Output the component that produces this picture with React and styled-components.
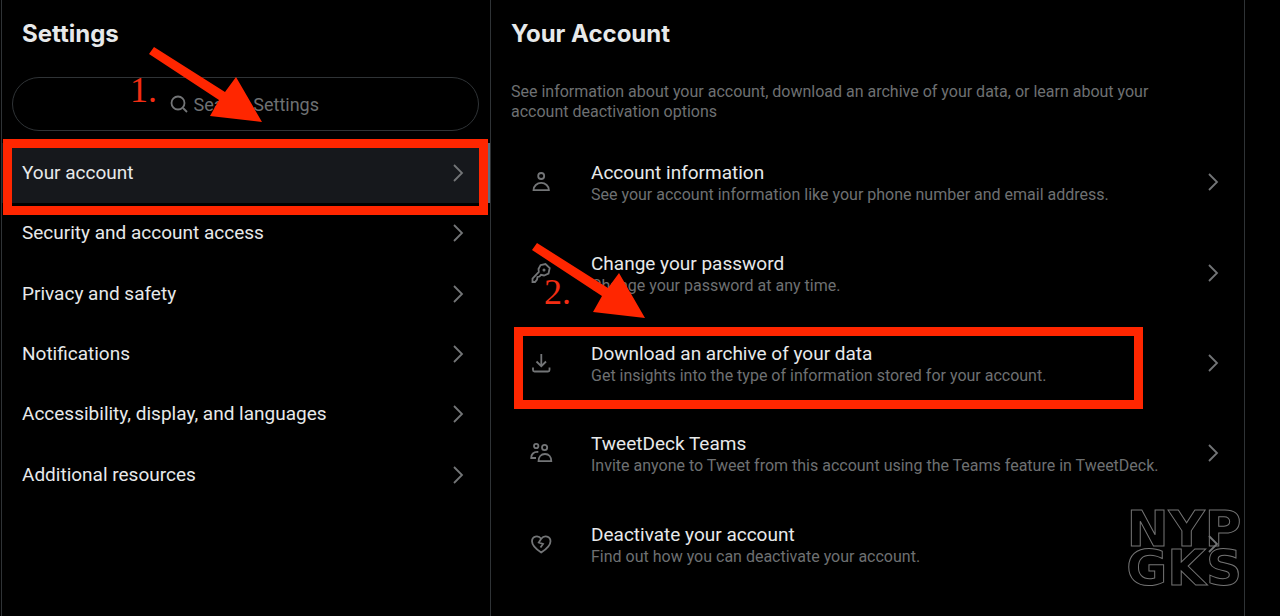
import React from 'react';
import styled, { createGlobalStyle } from 'styled-components';

const GlobalStyle = createGlobalStyle`
    * {
        box-sizing: border-box;
    }
    body {
        margin: 0;
        background-color: #000;
        color: #e7e9ea;
        font-family: Roboto, "Liberation Sans", sans-serif;
    }
`;
const MainDiv = styled.div`
    display: grid;
    grid-template-columns: 490fr 754fr 35fr;
    min-height: 100vh;
    padding-left: 1px;
`;
const LeftDiv = styled.aside`
    position: relative;
    border-left: 1px solid #2f3336;
    border-right: 1px solid #2f3336;
`;
const RightDiv = styled.main`
    position: relative;
    border-right: 1px solid #2f3336;
`;
const Heading = styled.h1`
    margin: 0;
    padding: 18px 20px 0;
    font-family: Inter, "Liberation Sans", sans-serif;
    font-size: 24px;
    line-height: 32px;
    font-weight: 700;
`;
const SearchBox = styled.label`
    display: flex;
    justify-content: center;
    align-items: center;
    gap: 6px;
    height: 54px;
    margin: 27px 11px 12px 10px;
    border: 1px solid #2f3336;
    border-radius: 27px;
    color: #71767b;
`;
const SearchInput = styled.input`
    width: 128px;
    padding: 0;
    border: none;
    outline: none;
    background: transparent;
    color: #e7e9ea;
    font-family: inherit;
    font-size: 18px;
    &::placeholder {
        color: #6e7072;
        opacity: 1;
    }
`;
const Menu = styled.nav`
    display: grid;
    grid-auto-rows: 1fr;
    height: 362px;
`;
const MenuLink = styled.a`
    position: relative;
    display: flex;
    justify-content: space-between;
    align-items: center;
    padding: 0 20px;
    border-right: 2px solid ${(props) => (props.$active ? '#5b7083' : 'transparent')};
    background-color: ${(props) => (props.$active ? '#16181c' : 'transparent')};
    color: inherit;
    font-size: 19px;
    line-height: 24px;
    text-decoration: none;
`;
const Intro = styled.p`
    margin: 0;
    padding: 32px 60px 16px 20px;
    color: #6e7072;
    font-size: 16px;
    line-height: 20px;
`;
const Options = styled.div`
    display: grid;
    grid-auto-rows: 1fr;
    height: 452px;
`;
const OptionLink = styled.a`
    position: relative;
    display: flex;
    align-items: center;
    padding: 0 21px 2px 38px;
    color: inherit;
    text-decoration: none;
`;
const OptionText = styled.div`
    flex: 1;
    margin-left: 38px;
    padding-top: 2px;
`;
const OptionTitle = styled.div`
    font-size: 19px;
    line-height: 24px;
`;
const OptionInfo = styled.div`
    color: #6e7072;
    font-size: 16px;
    line-height: 20px;
`;
const Icon = styled.svg`
    flex: none;
    width: ${(props) => props.$size || 24}px;
    height: ${(props) => props.$size || 24}px;
    fill: none;
    stroke: #737577;
    stroke-width: 1.8;
`;
// red boxes, arrows and numbers drawn over the page
const MenuFrame = styled.span`
    position: absolute;
    top: -4px;
    right: 0;
    bottom: -12px;
    left: 1px;
    border: 9px solid #ff2600;
`;
const OptionFrame = styled.span`
    position: absolute;
    top: 8px;
    right: 101px;
    bottom: 0;
    left: 23px;
    border: 9px solid #ff2600;
`;
const ArrowSvg = styled.svg`
    position: absolute;
    top: ${(props) => props.$top}px;
    left: ${(props) => props.$left}px;
    width: 114px;
    height: 78px;
    fill: #ff2600;
    z-index: 1;
`;
const StepNumber = styled.span`
    position: absolute;
    top: ${(props) => props.$top}px;
    left: ${(props) => props.$left}px;
    color: #f32d13;
    font-family: "Liberation Serif", serif;
    font-size: 36px;
    line-height: 40px;
    z-index: 1;
`;
const Watermark = styled.div`
    position: absolute;
    top: 510px;
    right: 2px;
    color: transparent;
    -webkit-text-stroke: 1px #747474;
    font-family: "DejaVu Sans", sans-serif;
    font-size: 50px;
    line-height: 39px;
    font-weight: 700;
    text-align: center;
    pointer-events: none;
`;

const Chevron = () => (
    <Icon $size={20} viewBox="0 0 20 20">
        <path d="M6 2L14 10L6 18" />
    </Icon>
);

const Arrow = ({ top, left }) => (
    <ArrowSvg $top={top} $left={left} viewBox="0 0 114 78">
        <path d="M5 1L76 46L87 31L113 76L61 70L70 54L0 8Z" />
    </ArrowSvg>
);

const Dashboard = () => {
    const menu = [
        'Your account',
        'Security and account access',
        'Privacy and safety',
        'Notifications',
        'Accessibility, display, and languages',
        'Additional resources',
    ];
    const options = [
        {
            title: 'Account information',
            info: 'See your account information like your phone number and email address.',
            icon: (
                <>
                    <circle cx="12.2" cy="6" r="3" />
                    <path d="M4.5 20.2C4.5 16 8 12.9 12.2 12.9S19.9 16 19.9 20.2Z" />
                </>
            ),
        },
        {
            title: 'Change your password',
            info: 'Change your password at any time.',
            icon: (
                <>
                    <path d="M11.5 4.2L16.5 3L20.7 7L19.5 12.5L15 14.5L12 13.8L10.5 15.5L8.5 16L8 18.5L6 21H3.5V17.5L9.8 11L9.5 8Z" />
                    <circle cx="15" cy="9" r="0.6" />
                </>
            ),
        },
        {
            title: 'Download an archive of your data',
            info: 'Get insights into the type of information stored for your account.',
            icon: <path d="M12.3 3V15M7.5 10.5L12.3 15.2L17 10.5M4 16.5V19Q4 20.5 5.5 20.5H19Q20.5 20.5 20.5 19V16.5" />,
        },
        {
            title: 'TweetDeck Teams',
            info: 'Invite anyone to Tweet from this account using the Teams feature in TweetDeck.',
            icon: (
                <>
                    <circle cx="7.2" cy="5" r="2.2" />
                    <circle cx="15.6" cy="6.5" r="2.6" />
                    <path d="M9.5 20.2C9.5 16 12 13 16 13S22.3 16 22.3 20.2ZM7 17H2.2C2 13.5 4.5 10.5 9.3 11" />
                </>
            ),
        },
        {
            title: 'Deactivate your account',
            info: 'Find out how you can deactivate your account.',
            icon: (
                <path d="M12.2 20.5C7 17 3 13 3 9.2C3 4.5 9 2.5 12.2 6.8C15.4 2.5 21.5 4.5 21.5 9.2C21.5 13 17.5 17 12.2 20.5ZM12.2 6.8L9.8 10.5L14 12L11.5 15.5" />
            ),
        },
    ];
    return (
        <MainDiv>
            <GlobalStyle />
            <LeftDiv>
                <Heading>Settings</Heading>
                <SearchBox>
                    <Icon $size={18} viewBox="0 0 18 18">
                        <circle cx="8" cy="8" r="6.5" />
                        <path d="M13 13l4 4" />
                    </Icon>
                    <SearchInput type="text" placeholder="Search Settings" aria-label="Search Settings" />
                </SearchBox>
                <Menu>
                    {
                        menu.map((item, index) => {
                            return (
                                <MenuLink href="#" key={index} $active={index === 0}>
                                    {item}
                                    <Chevron />
                                    {index === 0 && <MenuFrame />}
                                </MenuLink>
                            )
                        })
                    }
                </Menu>
                <StepNumber $top={70} $left={128}>1.</StepNumber>
                <Arrow top={46} left={147} />
            </LeftDiv>
            <RightDiv>
                <Heading as="h2">Your Account</Heading>
                <Intro>
                    See information about your account, download an archive of your data, or learn about your account deactivation options
                </Intro>
                <Options>
                    {
                        options.map((item, index) => {
                            return (
                                <OptionLink href="#" key={index}>
                                    <Icon viewBox="0 0 24 24">{item.icon}</Icon>
                                    <OptionText>
                                        <OptionTitle>{item.title}</OptionTitle>
                                        <OptionInfo>{item.info}</OptionInfo>
                                    </OptionText>
                                    <Chevron />
                                    {index === 2 && <OptionFrame />}
                                </OptionLink>
                            )
                        })
                    }
                </Options>
                <StepNumber $top={272} $left={53}>2.</StepNumber>
                <Arrow top={242} left={41} />
                <Watermark>NYP<br />GKS</Watermark>
            </RightDiv>
        </MainDiv>
    )
}

export default Dashboard
